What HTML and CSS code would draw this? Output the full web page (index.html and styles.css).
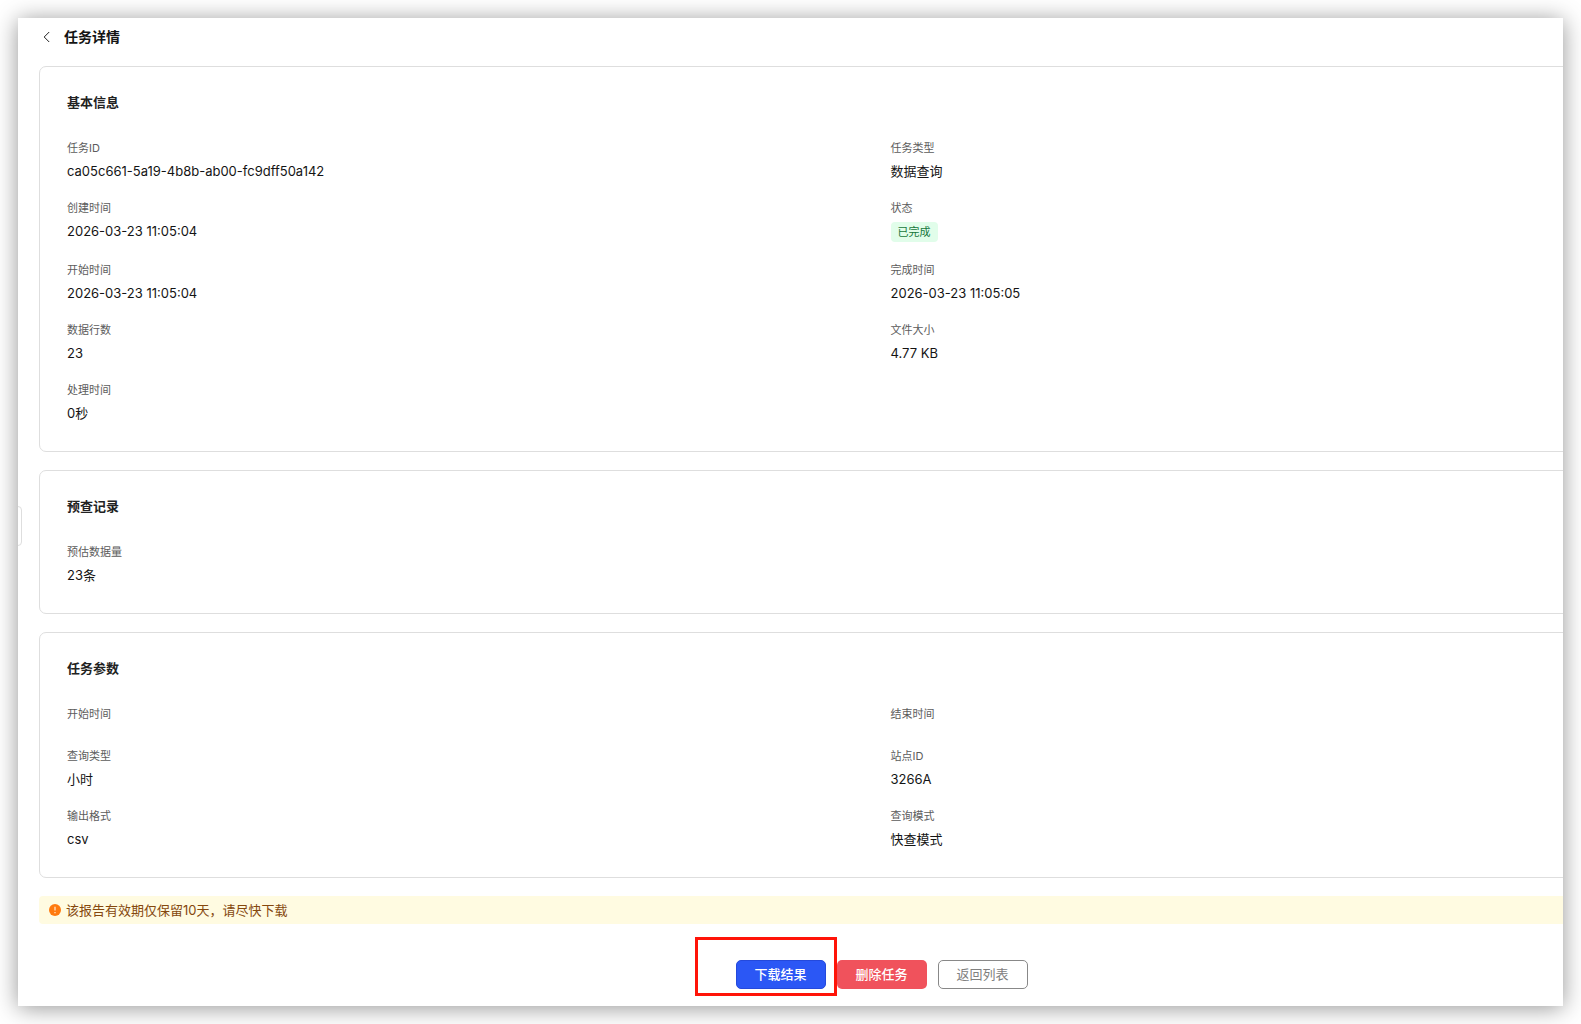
FILE: index.html
```html
<!DOCTYPE html>
<html lang="zh-CN">
<head>
<meta charset="utf-8">
<title>任务详情</title>
<link rel="stylesheet" href="styles.css">
</head>
<body>
<main class="window">
  <div class="drawer-handle"></div>
  <div class="content">
    <header class="page-header">
      <button class="back" type="button" aria-label="返回">
        <svg width="8" height="12" viewBox="0 0 8 12" fill="none" stroke="currentColor" stroke-width="1"><path d="M6.2 1 1.2 6l5 5"/></svg>
      </button>
      <h1 class="page-title">任务详情</h1>
    </header>

    <section class="card">
      <h2 class="card-title">基本信息</h2>
      <dl class="fields">
        <div class="field"><dt>任务ID</dt><dd>ca05c661-5a19-4b8b-ab00-fc9dff50a142</dd></div>
        <div class="field"><dt>任务类型</dt><dd>数据查询</dd></div>
        <div class="field"><dt>创建时间</dt><dd>2026-03-23 11:05:04</dd></div>
        <div class="field"><dt>状态</dt><dd><span class="tag">已完成</span></dd></div>
        <div class="field"><dt>开始时间</dt><dd>2026-03-23 11:05:04</dd></div>
        <div class="field"><dt>完成时间</dt><dd>2026-03-23 11:05:05</dd></div>
        <div class="field"><dt>数据行数</dt><dd>23</dd></div>
        <div class="field"><dt>文件大小</dt><dd>4.77 KB</dd></div>
        <div class="field"><dt>处理时间</dt><dd>0秒</dd></div>
      </dl>
    </section>

    <section class="card">
      <h2 class="card-title">预查记录</h2>
      <dl class="fields">
        <div class="field"><dt>预估数据量</dt><dd>23条</dd></div>
      </dl>
    </section>

    <section class="card">
      <h2 class="card-title">任务参数</h2>
      <dl class="fields">
        <div class="field"><dt>开始时间</dt><dd></dd></div>
        <div class="field"><dt>结束时间</dt><dd></dd></div>
        <div class="field"><dt>查询类型</dt><dd>小时</dd></div>
        <div class="field"><dt>站点ID</dt><dd>3266A</dd></div>
        <div class="field"><dt>输出格式</dt><dd>csv</dd></div>
        <div class="field"><dt>查询模式</dt><dd>快查模式</dd></div>
      </dl>
    </section>

    <div class="notice" role="alert">
      <svg width="12" height="12" viewBox="0 0 12 12"><circle cx="6" cy="6" r="6" fill="#ff7a0f"/><path d="M6 2.8v3.8M6 7.9v1.3" stroke="#ffe3c4" stroke-width="1.3"/></svg>
      <span>该报告有效期仅保留10天，请尽快下载</span>
    </div>

    <div class="actions">
      <div class="marked">
        <button class="btn btn-primary" type="button">下载结果</button>
        <div class="marker"></div>
      </div>
      <button class="btn btn-danger" type="button">删除任务</button>
      <button class="btn btn-plain" type="button">返回列表</button>
    </div>
  </div>
</main>
</body>
</html>
```
FILE: styles.css
```css
* { box-sizing: border-box; }

body {
  margin: 0;
  padding: 18px;
  background: #fff;
  color: #141414;
  font-family: Inter, "Noto Sans CJK SC", sans-serif;
  font-size: 13px;
  line-height: 18px;
}

h1, h2, dl, dd { margin: 0; }

.window {
  position: relative;
  overflow: hidden;
  padding: 0 0 17px 21px;
  background: #fff;
  box-shadow: 0 2px 22px rgba(0, 0, 0, 0.42);
}

/* The content is wider than the window and runs under its right edge. */
.content { margin-right: -161px; }

.drawer-handle {
  position: absolute;
  left: -1px;
  top: 488px;
  width: 5px;
  height: 40px;
  border: 1px solid #dedede;
  border-radius: 0 4px 4px 0;
}

.page-header {
  display: flex;
  align-items: center;
  gap: 13px;
  height: 38px;
  margin-bottom: 10px;
  padding-left: 4px;
}

.back {
  display: flex;
  padding: 0;
  border: 0;
  background: none;
  color: #222;
}

.page-title { font-size: 14px; font-weight: 600; }

.card {
  margin-bottom: 18px;
  padding: 26px 27px 29px;
  border: 1px solid #dedede;
  border-radius: 7px;
}

.card-title {
  margin-bottom: 29px;
  color: #222;
  font-size: 13px;
  font-weight: 600;
}

.fields {
  display: grid;
  grid-template-columns: 1fr 1fr;
  gap: 20px 18px;
}

.field dt {
  margin-bottom: 6px;
  color: #5c5c5c;
  font-size: 11px;
  line-height: 16px;
}

.tag {
  display: block;
  width: fit-content;
  padding: 0 7px;
  border-radius: 4px;
  background: #e1fdea;
  color: #16763a;
  font-size: 11px;
  line-height: 20px;
}

.notice {
  display: flex;
  align-items: center;
  gap: 5px;
  height: 28px;
  padding-left: 10px;
  border-radius: 4px;
  background: #fffbe1;
  color: #85480e;
}

.actions {
  display: flex;
  justify-content: center;
  gap: 11px;
  margin-top: 36px;
}

.btn {
  width: 90px;
  height: 29px;
  padding: 0 0 2px;
  border: 1px solid transparent;
  border-radius: 5px;
  font: inherit;
  font-weight: 500;
}

.btn-primary { border-color: #2449dc; background: #2b57f5; color: #fff; }
.btn-danger { background: #f0525c; color: #fff; }
.btn-plain { border-color: #888; background: #fff; color: #808080; font-weight: 400; }

.marked { position: relative; }

.marker {
  position: absolute;
  inset: -23px -11px -7px -41px;
  border: 3px solid #ff1408;
  pointer-events: none;
}
```
